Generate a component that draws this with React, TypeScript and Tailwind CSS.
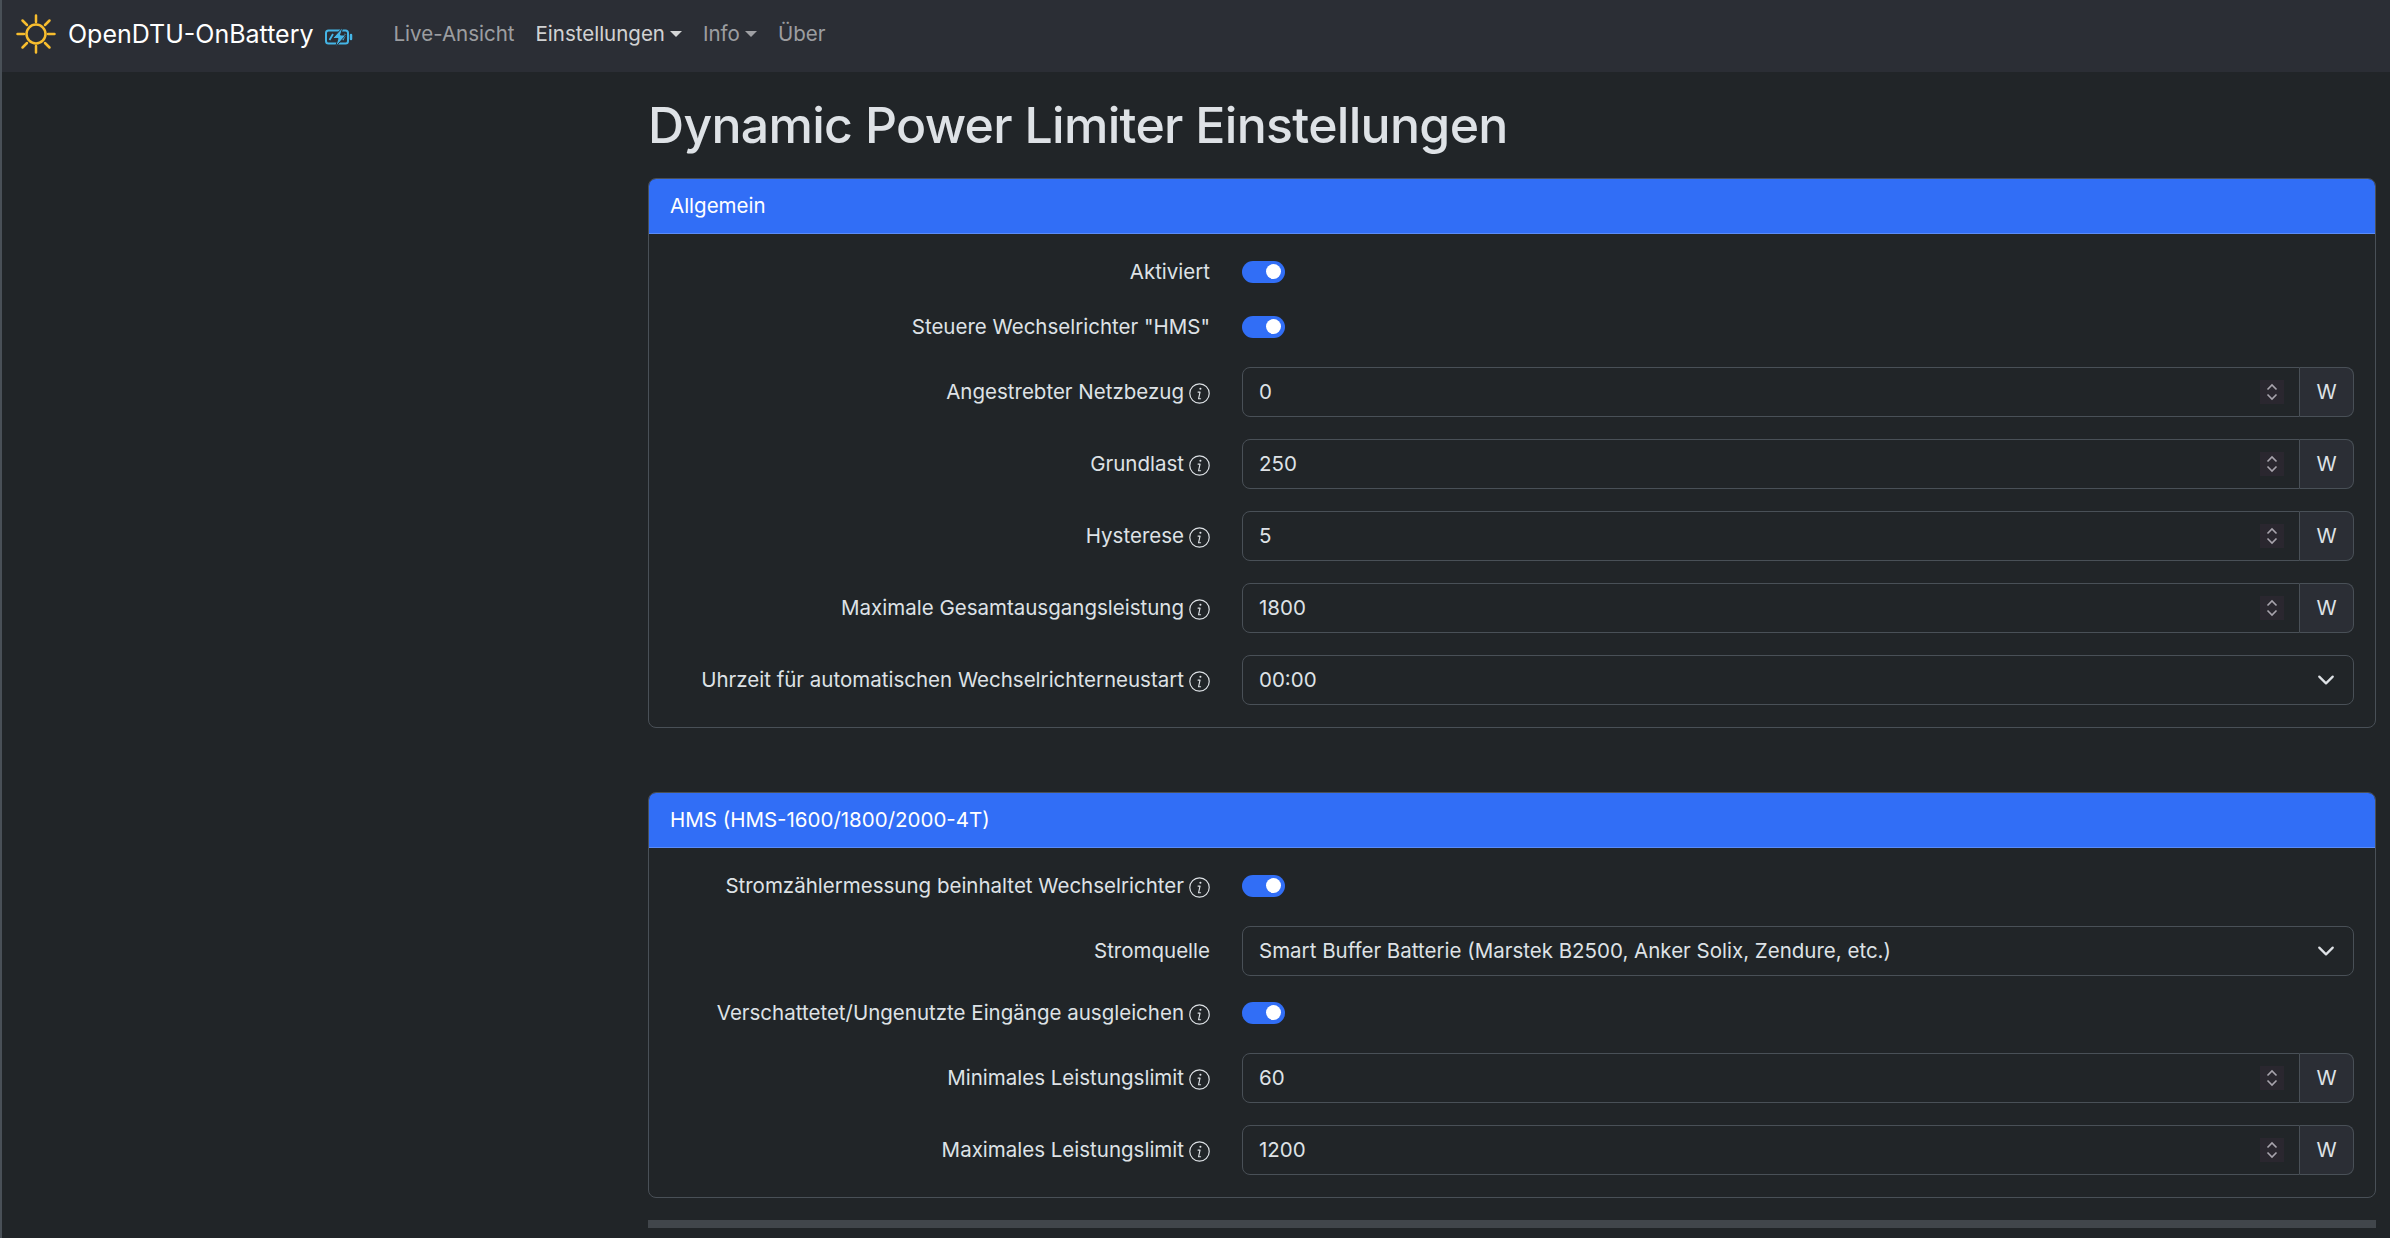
const font = "font-['Inter','Noto_Sans',sans-serif]"

function SunLogo() {
  return (
    <svg viewBox="0 0 40 40" className="w-[40px] h-[40px] shrink-0" fill="none" stroke="#f7bd2e" strokeWidth="2.500" strokeLinecap="round">
      <circle cx="20" cy="20" r="9.500" />
      <path d="M20 1.500v6.500M20 32v6.500M1.500 20H8M32 20h6.500M6.500 6.500l4.500 4.500M29 29l4.500 4.500M6.500 33.500 11 29M29 11l4.500-4.500" />
    </svg>
  )
}

function BatteryLogo() {
  return (
    <svg viewBox="0 0 28 20" className="w-[28px] h-[20px] shrink-0 mt-[6px]" fill="none">
      <rect x="1" y="3.500" width="22" height="13" rx="2.500" stroke="#45b5e6" strokeWidth="2" />
      <path d="M26 8v4" stroke="#45b5e6" strokeWidth="2.500" strokeLinecap="round" />
      <path d="M4.500 13l3.500-6M17.500 13 20.500 7" stroke="#45b5e6" strokeWidth="1.800" />
      <path d="M18 0 7.500 11.500H13L10.500 20 21 8h-5.500L18 0Z" fill="#45b5e6" stroke="#2b2e35" strokeWidth="1" />
    </svg>
  )
}

function Caret() {
  return <span className="inline-block ml-[5px] w-0 h-0 border-x-[6px] border-x-transparent border-t-[6px] border-t-current" />
}

function InfoIcon() {
  return (
    <svg viewBox="0 0 16 16" className="inline-block w-[21px] h-[21px] ml-[5px] align-[-5px]" fill="none" stroke="currentColor" strokeWidth="0.900">
      <circle cx="8" cy="8" r="7.400" />
      <path d="M6.900 6.900h1.500l-1.100 5.100h1.500" strokeLinecap="round" strokeLinejoin="round" />
      <circle cx="8.700" cy="4.400" r="0.800" fill="currentColor" stroke="none" />
    </svg>
  )
}

function Label({ text, info }: { text: string; info?: boolean }) {
  return (
    <div className="w-[540px] shrink-0 text-right text-[#dee2e6]">
      {text}
      {info && <InfoIcon />}
    </div>
  )
}

function ToggleRow({ text, info, className = "" }: { text: string; info?: boolean; className?: string }) {
  return (
    <div className={`flex items-center gap-[32px] h-[33px] ${className}`}>
      <Label text={text} info={info} />
      <div className="w-[43px] h-[22px] rounded-full bg-[#316ef6] flex items-center justify-end pr-[4px]">
        <div className="w-[15px] h-[15px] rounded-full bg-white" />
      </div>
    </div>
  )
}

function NumberRow({ text, value }: { text: string; value: string }) {
  return (
    <div className="flex items-center gap-[32px]">
      <Label text={text} info />
      <div className="flex flex-1 h-[50px] text-[#dee2e6]">
        <div className="flex-1 flex items-center justify-between pl-[16px] pr-[15px] border border-[#495057] rounded-l-[8px]">
          <span>{value}</span>
          <div className="w-[24px] h-[24px] bg-[#2a272f] flex items-center justify-center">
            <svg viewBox="0 0 12 20" className="w-[12px] h-[20px]" fill="none" stroke="#a8a4ad" strokeWidth="1.600">
              <path d="M1.500 7.500 6 3l4.500 4.500M1.500 12.500 6 17l4.500-4.500" />
            </svg>
          </div>
        </div>
        <div className="w-[54px] flex items-center justify-center bg-[#2b2e35] border border-l-0 border-[#495057] rounded-r-[8px]">W</div>
      </div>
    </div>
  )
}

function SelectRow({ text, value, info, className = "" }: { text: string; value: string; info?: boolean; className?: string }) {
  return (
    <div className={`flex items-center gap-[32px] ${className}`}>
      <Label text={text} info={info} />
      <div className="flex-1 h-[50px] flex items-center justify-between pl-[16px] pr-[18px] border border-[#495057] rounded-[8px] text-[#dee2e6]">
        <span>{value}</span>
        <svg viewBox="0 0 16 16" className="w-[18px] h-[18px]" fill="none" stroke="#dee2e6" strokeWidth="2" strokeLinecap="round" strokeLinejoin="round">
          <path d="m2 5 6 6 6-6" />
        </svg>
      </div>
    </div>
  )
}

function Card({ title, children }: { title: string; children: React.ReactNode }) {
  return (
    <section className="border border-[#495057] rounded-[8px] overflow-hidden">
      <div className="h-[55px] flex items-center px-[21px] bg-[#316ef6] text-white border-b border-[#5b8cf8]">{title}</div>
      <div className="flex flex-col gap-[22px] px-[21px] pt-[21px] pb-[22px]">{children}</div>
    </section>
  )
}

export default function App() {
  return (
    <div className={`${font} min-h-screen bg-[#212528] text-[20.500px] leading-[30px] border-l-2 border-[#495057]`}>
      <nav className="h-[72px] bg-[#2b2e35] flex items-center pl-[14px] pb-[4px]">
        <SunLogo />
        <span className="ml-[12px] text-white text-[25px]">OpenDTU-OnBattery</span>
        <span className="ml-[11px]"><BatteryLogo /></span>
        <div className="flex items-center gap-[21px] ml-[41px] text-[rgba(255,255,255,0.55)]">
          <span>Live-Ansicht</span>
          <span className="text-[rgba(255,255,255,0.8)] flex items-center">Einstellungen<Caret /></span>
          <span className="flex items-center">Info<Caret /></span>
          <span>Über</span>
        </div>
      </nav>

      <main className="pl-[646px] pr-[14px]">
        <h1 className="h-[106px] flex items-center text-[50px] font-[550] tracking-[-0.700px] text-[#dee2e6]">Dynamic Power Limiter Einstellungen</h1>

        <Card title="Allgemein">
          <ToggleRow text="Aktiviert" />
          <ToggleRow text={'Steuere Wechselrichter "HMS"'} className="mb-[2px]" />
          <NumberRow text="Angestrebter Netzbezug" value="0" />
          <NumberRow text="Grundlast" value="250" />
          <NumberRow text="Hysterese" value="5" />
          <NumberRow text="Maximale Gesamtausgangsleistung" value="1800" />
          <SelectRow text="Uhrzeit für automatischen Wechselrichterneustart" value="00:00" info />
        </Card>

        <div className="h-[64px]" />

        <Card title="HMS (HMS-1600/1800/2000-4T)">
          <ToggleRow text="Stromzählermessung beinhaltet Wechselrichter" info className="mb-[2px]" />
          <SelectRow text="Stromquelle" value="Smart Buffer Batterie (Marstek B2500, Anker Solix, Zendure, etc.)" className="-mb-[2px]" />
          <ToggleRow text="Verschattetet/Ungenutzte Eingänge ausgleichen" info className="mb-[2px]" />
          <NumberRow text="Minimales Leistungslimit" value="60" />
          <NumberRow text="Maximales Leistungslimit" value="1200" />
        </Card>

        <div className="h-[8px] mt-[22px] bg-[#41464b]" />
      </main>
    </div>
  )
}
